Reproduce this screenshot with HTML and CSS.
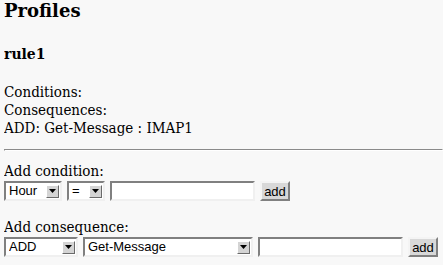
FILE: index.html
```html
<!DOCTYPE html>
<html lang="en">
<head>
    <meta charset="UTF-8">
    <title>Profiles</title>
    <link rel="stylesheet" href="styles.css">
</head>
<body>
    <h1 class="title">Profiles</h1>
    <h2 class="rule-name">rule1</h2>

    <div class="rule-info">
        <div>Conditions:</div>
        <div>Consequences:</div>
        <div>ADD: Get-Message : IMAP1</div>
    </div>

    <hr class="divider">

    <form class="add-form">
        <div class="form-label">Add condition:</div>
        <div class="form-row">
            <label class="select w-hour">
                <select><option>Hour</option></select>
                <span class="arrow"><svg width="7" height="4" viewBox="0 0 7 4"><path d="M0 0h7L3.5 4z" fill="#000"/></svg></span>
            </label>
            <label class="select w-op">
                <select><option>=</option></select>
                <span class="arrow"><svg width="7" height="4" viewBox="0 0 7 4"><path d="M0 0h7L3.5 4z" fill="#000"/></svg></span>
            </label>
            <input type="text" class="text-field">
            <button type="button" class="add-button">add</button>
        </div>
    </form>

    <form class="add-form">
        <div class="form-label">Add consequence:</div>
        <div class="form-row">
            <label class="select w-action">
                <select><option>ADD</option></select>
                <span class="arrow"><svg width="7" height="4" viewBox="0 0 7 4"><path d="M0 0h7L3.5 4z" fill="#000"/></svg></span>
            </label>
            <label class="select w-target">
                <select><option>Get-Message</option></select>
                <span class="arrow"><svg width="7" height="4" viewBox="0 0 7 4"><path d="M0 0h7L3.5 4z" fill="#000"/></svg></span>
            </label>
            <input type="text" class="text-field">
            <button type="button" class="add-button">add</button>
        </div>
    </form>
</body>
</html>
```

FILE: styles.css
```css
body {
    font-family: "DejaVu Serif Condensed", "DejaVu Serif", serif;
    font-size: 15px;
    background-color: #f8f8f8;
    color: #000;
    margin: 0 0 0 4px;
}

.title {
    font-family: "DejaVu Serif", serif;
    font-size: 18px;
    line-height: 22px;
    margin: 0;
}

.rule-name {
    font-family: "DejaVu Serif", serif;
    font-size: 14px;
    line-height: 18px;
    margin: 23px 0 0 0;
}

.rule-info {
    margin-top: 20px;
    line-height: 18px;
}

.divider {
    height: 0;
    margin: 12px 0 11px 0;
    border-top: 1px solid #8a8a8a;
    border-left: 1px solid #8a8a8a;
    border-bottom: 1px solid #fff;
    border-right: 1px solid #fff;
}

.add-form {
    margin: 0 0 17px 0;
}

.form-label {
    line-height: 18px;
    margin-bottom: 1px;
}

.form-row {
    display: flex;
    gap: 5px;
    height: 20px;
}

.select {
    display: flex;
    align-items: center;
    box-sizing: border-box;
    height: 20px;
    background-color: #fff;
    border: 2px solid;
    border-color: #808080 #f0f0f0 #f0f0f0 #808080;
}

.select select {
    appearance: none;
    -webkit-appearance: none;
    border: none;
    background: transparent;
    font-family: "Liberation Sans", Arial, sans-serif;
    font-size: 13px;
    color: #000;
    padding: 0 0 0 3px;
    margin: 0;
    flex: 1;
    min-width: 0;
    height: 16px;
    line-height: 16px;
}

.arrow {
    display: flex;
    align-items: center;
    justify-content: center;
    box-sizing: border-box;
    width: 13px;
    height: 13px;
    margin-right: 1px;
    background-color: #d4d4d4;
    border: 1px solid;
    border-color: #fff #6a6a6a #6a6a6a #fff;
}

.w-hour { width: 58px; }
.w-op { width: 38px; }
.w-action { width: 74px; }
.w-target { width: 170px; }

.text-field {
    box-sizing: border-box;
    width: 145px;
    height: 20px;
    margin: 0;
    padding: 0 3px;
    background-color: #fff;
    border: 2px solid;
    border-color: #808080 #f0f0f0 #f0f0f0 #808080;
    font-family: "Liberation Sans", Arial, sans-serif;
    font-size: 13px;
}

.add-button {
    box-sizing: border-box;
    width: 30px;
    height: 20px;
    margin: 0;
    padding: 0;
    background-color: #d8d8d8;
    border: 2px solid;
    border-color: #f4f4f4 #808080 #808080 #f4f4f4;
    font-family: "Liberation Sans", Arial, sans-serif;
    font-size: 13px;
    color: #000;
}
```
